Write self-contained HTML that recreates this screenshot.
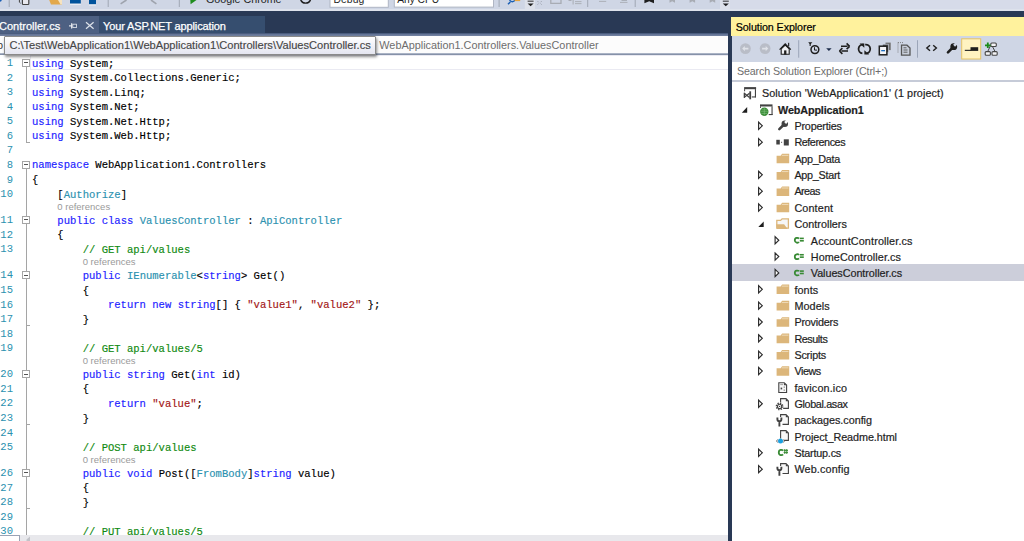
<!DOCTYPE html>
<html><head><meta charset="utf-8">
<style>
*{margin:0;padding:0;box-sizing:border-box}
html,body{width:1024px;height:541px;overflow:hidden;background:#fff;position:relative;font-family:"Liberation Sans",sans-serif}
.a{position:absolute}
.t{position:absolute;white-space:pre;line-height:1}
#tb{left:0;top:0;width:1024px;height:11px;background:#cfd6e5}
#well{left:0;top:11px;width:1024px;height:25px;background:#293955}
.code{font-family:"Liberation Mono",monospace;font-size:10.56px;color:#000;-webkit-text-stroke-width:0.15px}
.k{color:#2222ff}.ty{color:#2b91af}.s{color:#a31515}.c{color:#108a10}
.ln{font-family:"Liberation Mono",monospace;font-size:10.56px;color:#2b91af;text-align:right;width:13px;left:0}
.cl{font-size:9.5px;color:#9a9a9a}
.se{font-size:11px;color:#1e1e1e;-webkit-text-stroke:0.2px #1e1e1e}
</style></head><body>
<!-- toolbar -->
<div class="a" id="tb"></div>
<div class="a" style="left:720px;top:0;width:304px;height:11px;background:#d6dbe9"></div>
<div class="a" style="left:0;top:9px;width:1024px;height:2px;background:#dde2ec"></div>
<!-- tab well -->
<div class="a" id="well"></div>
<div class="a" style="left:0;top:16px;width:99px;height:18px;background:#4d6082"></div>
<div class="a" style="left:99px;top:16px;width:166px;height:17px;background:#364e6f"></div>
<div class="a" style="left:0;top:33px;width:728px;height:1px;background:#4a5c7e"></div><div class="a" style="left:0;top:34px;width:728px;height:2px;background:linear-gradient(#5f7092,#7584a3)"></div>
<div class="t" style="left:-1px;top:21px;font-size:11px;color:#fff;-webkit-text-stroke:0.25px #fff">Controller.cs</div>
<div class="t" style="left:103.00px;top:21.00px;font-size:11px;letter-spacing:-0.125px;color:#fff;-webkit-text-stroke:0.25px #fff">Your ASP.NET application</div>

<!-- nav bar -->
<div class="a" style="left:0;top:36px;width:728px;height:17px;background:#fcfcfc"></div>
<div class="a" style="left:0;top:53px;width:728px;height:1px;background:#aab3c5"></div><div class="a" style="left:0;top:54px;width:728px;height:1px;background:#8591a8"></div>
<div class="t" style="left:379.30px;top:40.00px;font-size:10.85px;letter-spacing:0.007px;color:#6d6d6d;">WebApplication1.Controllers.ValuesController</div>

<!-- editor -->
<div class="t" style="left:-3px;top:40px;font-size:10.85px;color:#3a3a3a">b</div>
<div class="a" style="left:30px;top:55px;width:702px;height:15px;border:1px solid #eaeaf2"></div>
<div class="t ln" style="top:58.11px">1</div>
<div class="t code" style="left:32px;top:58.61px"><span class="k">using</span> System;</div>
<div class="t ln" style="top:72.65px">2</div>
<div class="t code" style="left:32px;top:73.15px"><span class="k">using</span> System.Collections.Generic;</div>
<div class="t ln" style="top:87.20px">3</div>
<div class="t code" style="left:32px;top:87.70px"><span class="k">using</span> System.Linq;</div>
<div class="t ln" style="top:101.75px">4</div>
<div class="t code" style="left:32px;top:102.25px"><span class="k">using</span> System.Net;</div>
<div class="t ln" style="top:116.30px">5</div>
<div class="t code" style="left:32px;top:116.80px"><span class="k">using</span> System.Net.Http;</div>
<div class="t ln" style="top:130.85px">6</div>
<div class="t code" style="left:32px;top:131.35px"><span class="k">using</span> System.Web.Http;</div>
<div class="t ln" style="top:145.40px">7</div>
<div class="t ln" style="top:159.95px">8</div>
<div class="t code" style="left:32px;top:160.45px"><span class="k">namespace</span> WebApplication1.Controllers</div>
<div class="t ln" style="top:174.50px">9</div>
<div class="t code" style="left:32px;top:175.00px">{</div>
<div class="t ln" style="top:189.05px">10</div>
<div class="t code" style="left:32px;top:189.55px">    [<span class="ty">Authorize</span>]</div>
<div class="t cl" style="left:57.34px;top:202.10px">0 references</div>
<div class="t ln" style="top:215.21px">11</div>
<div class="t code" style="left:32px;top:215.71px">    <span class="k">public</span> <span class="k">class</span> <span class="ty">ValuesController</span> : <span class="ty">ApiController</span></div>
<div class="t ln" style="top:229.75px">12</div>
<div class="t code" style="left:32px;top:230.25px">    {</div>
<div class="t ln" style="top:244.30px">13</div>
<div class="t code" style="left:32px;top:244.80px">        <span class="c">// GET api/values</span></div>
<div class="t cl" style="left:82.69px;top:257.36px">0 references</div>
<div class="t ln" style="top:270.46px">14</div>
<div class="t code" style="left:32px;top:270.96px">        <span class="k">public</span> <span class="ty">IEnumerable</span>&lt;<span class="k">string</span>&gt; Get()</div>
<div class="t ln" style="top:285.01px">15</div>
<div class="t code" style="left:32px;top:285.51px">        {</div>
<div class="t ln" style="top:299.56px">16</div>
<div class="t code" style="left:32px;top:300.06px">            <span class="k">return</span> <span class="k">new</span> <span class="k">string</span>[] { <span class="s">&quot;value1&quot;</span>, <span class="s">&quot;value2&quot;</span> };</div>
<div class="t ln" style="top:314.11px">17</div>
<div class="t code" style="left:32px;top:314.61px">        }</div>
<div class="t ln" style="top:328.66px">18</div>
<div class="t ln" style="top:343.21px">19</div>
<div class="t code" style="left:32px;top:343.71px">        <span class="c">// GET api/values/5</span></div>
<div class="t cl" style="left:82.69px;top:356.26px">0 references</div>
<div class="t ln" style="top:369.37px">20</div>
<div class="t code" style="left:32px;top:369.87px">        <span class="k">public</span> <span class="k">string</span> Get(<span class="k">int</span> id)</div>
<div class="t ln" style="top:383.92px">21</div>
<div class="t code" style="left:32px;top:384.42px">        {</div>
<div class="t ln" style="top:398.46px">22</div>
<div class="t code" style="left:32px;top:398.96px">            <span class="k">return</span> <span class="s">&quot;value&quot;</span>;</div>
<div class="t ln" style="top:413.01px">23</div>
<div class="t code" style="left:32px;top:413.51px">        }</div>
<div class="t ln" style="top:427.56px">24</div>
<div class="t ln" style="top:442.11px">25</div>
<div class="t code" style="left:32px;top:442.61px">        <span class="c">// POST api/values</span></div>
<div class="t cl" style="left:82.69px;top:455.16px">0 references</div>
<div class="t ln" style="top:468.27px">26</div>
<div class="t code" style="left:32px;top:468.77px">        <span class="k">public</span> <span class="k">void</span> Post([<span class="ty">FromBody</span>]<span class="k">string</span> value)</div>
<div class="t ln" style="top:482.82px">27</div>
<div class="t code" style="left:32px;top:483.32px">        {</div>
<div class="t ln" style="top:497.37px">28</div>
<div class="t code" style="left:32px;top:497.87px">        }</div>
<div class="t ln" style="top:511.92px">29</div>
<div class="t ln" style="top:526.47px">30</div>
<div class="t code" style="left:32px;top:526.97px">        <span class="c">// PUT api/values/5</span></div>
<div class="a" style="left:22px;top:58.80px;width:8px;height:8px;border:1px solid #a5a5a5;background:#fff"></div>
<div class="a" style="left:24px;top:62.30px;width:4px;height:1px;background:#555"></div>
<div class="a" style="left:22px;top:160.64px;width:8px;height:8px;border:1px solid #a5a5a5;background:#fff"></div>
<div class="a" style="left:24px;top:164.14px;width:4px;height:1px;background:#555"></div>
<div class="a" style="left:22px;top:215.90px;width:8px;height:8px;border:1px solid #a5a5a5;background:#fff"></div>
<div class="a" style="left:24px;top:219.40px;width:4px;height:1px;background:#555"></div>
<div class="a" style="left:22px;top:271.16px;width:8px;height:8px;border:1px solid #a5a5a5;background:#fff"></div>
<div class="a" style="left:24px;top:274.66px;width:4px;height:1px;background:#555"></div>
<div class="a" style="left:22px;top:370.06px;width:8px;height:8px;border:1px solid #a5a5a5;background:#fff"></div>
<div class="a" style="left:24px;top:373.56px;width:4px;height:1px;background:#555"></div>
<div class="a" style="left:22px;top:468.96px;width:8px;height:8px;border:1px solid #a5a5a5;background:#fff"></div>
<div class="a" style="left:24px;top:472.46px;width:4px;height:1px;background:#555"></div>
<div class="a" style="left:26px;top:66.80px;width:1px;height:75.14px;background:#a5a5a5"></div>
<div class="a" style="left:26px;top:141.94px;width:4px;height:1px;background:#a5a5a5"></div>
<div class="a" style="left:26px;top:168.64px;width:1px;height:47.26px;background:#a5a5a5"></div>
<div class="a" style="left:26px;top:223.90px;width:1px;height:47.26px;background:#a5a5a5"></div>
<div class="a" style="left:26px;top:279.16px;width:1px;height:90.90px;background:#a5a5a5"></div>
<div class="a" style="left:26px;top:378.06px;width:1px;height:90.90px;background:#a5a5a5"></div>
<div class="a" style="left:26px;top:476.96px;width:1px;height:64.04px;background:#a5a5a5"></div>
<div class="a" style="left:26px;top:325.20px;width:4px;height:1px;background:#a5a5a5"></div>
<div class="a" style="left:26px;top:424.11px;width:4px;height:1px;background:#a5a5a5"></div>
<div class="a" style="left:26px;top:508.46px;width:4px;height:1px;background:#a5a5a5"></div>
<div class="a" style="left:0;top:535px;width:728px;height:6px;background:#e8e8ec"></div>
<div class="a" style="left:0;top:535px;width:20px;height:6px;background:#fff;border-top:1px solid #9aa3b5;border-right:1px solid #9aa3b5"></div>
<svg class="a" style="left:0;top:535px" width="40" height="6"><path d="M26.5 4.5 L30 1.5 V6 H26.5 Z" fill="#c2c3c9"/></svg>

<!-- tooltip -->
<div class="a" style="left:4px;top:36px;width:372px;height:19px;border:1px solid #8a8a8a;background:linear-gradient(#ffffff,#e4e5f0);box-shadow:1px 2px 3px rgba(0,0,0,0.45);border-radius:1px"></div>
<div class="t" style="left:9.40px;top:39.70px;font-size:11.1px;letter-spacing:0.000px;color:#464646;-webkit-text-stroke:0.15px #464646">C:\Test\WebApplication1\WebApplication1\Controllers\ValuesController.cs</div>

<!-- separator -->
<div class="a" style="left:728px;top:11px;width:4px;height:530px;background:#293955"></div>
<!-- solution explorer -->
<div class="a" style="left:731px;top:17px;width:293px;height:19px;background:#fff29d"></div>
<div class="t" style="left:735.70px;top:22.00px;font-size:10.7px;letter-spacing:-0.074px;color:#000;-webkit-text-stroke:0.2px #000">Solution Explorer</div>
<div class="a" style="left:732px;top:36px;width:292px;height:26px;background:#cfd6e5"></div>
<div class="a" style="left:732px;top:62px;width:292px;height:18px;background:#fff"></div>
<div class="a" style="left:732px;top:80px;width:292px;height:2px;background:#c6cbd8"></div>
<div class="t" style="left:736.90px;top:66.00px;font-size:10.7px;letter-spacing:-0.105px;color:#6d6d6d;">Search Solution Explorer (Ctrl+;)</div>
<div class="t se" style="left:762.00px;top:88.36px;font-size:10.8px;letter-spacing:0.084px;">Solution &#x27;WebApplication1&#x27; (1 project)</div>
<div class="t se" style="left:778.00px;top:104.71px;font-size:10.8px;letter-spacing:-0.120px;font-weight:bold;">WebApplication1</div>
<div class="t se" style="left:794.40px;top:121.06px;font-size:10.8px;letter-spacing:-0.183px;">Properties</div>
<div class="t se" style="left:794.40px;top:137.41px;font-size:10.8px;letter-spacing:-0.449px;">References</div>
<div class="t se" style="left:794.40px;top:153.76px;font-size:10.8px;letter-spacing:-0.309px;">App_Data</div>
<div class="t se" style="left:794.40px;top:170.11px;font-size:10.8px;letter-spacing:-0.263px;">App_Start</div>
<div class="t se" style="left:794.40px;top:186.46px;font-size:10.8px;letter-spacing:-0.547px;">Areas</div>
<div class="t se" style="left:794.40px;top:202.81px;font-size:10.8px;letter-spacing:0.141px;">Content</div>
<div class="t se" style="left:794.40px;top:219.16px;font-size:10.8px;letter-spacing:0.028px;">Controllers</div>
<div class="t se" style="left:810.80px;top:235.51px;font-size:10.8px;letter-spacing:0.140px;">AccountController.cs</div>
<div class="t se" style="left:810.80px;top:251.86px;font-size:10.8px;letter-spacing:0.086px;">HomeController.cs</div>
<div class="a" style="left:732px;top:264.35px;width:292px;height:16.35px;background:#ccceda"></div>
<div class="t se" style="left:810.80px;top:268.21px;font-size:10.8px;letter-spacing:-0.052px;">ValuesController.cs</div>
<div class="t se" style="left:794.40px;top:284.56px;font-size:10.8px;letter-spacing:0.091px;">fonts</div>
<div class="t se" style="left:794.40px;top:300.91px;font-size:10.8px;letter-spacing:0.094px;">Models</div>
<div class="t se" style="left:794.40px;top:317.26px;font-size:10.8px;letter-spacing:-0.204px;">Providers</div>
<div class="t se" style="left:794.40px;top:333.61px;font-size:10.8px;letter-spacing:-0.436px;">Results</div>
<div class="t se" style="left:794.40px;top:349.96px;font-size:10.8px;letter-spacing:-0.191px;">Scripts</div>
<div class="t se" style="left:794.40px;top:366.31px;font-size:10.8px;letter-spacing:-0.442px;">Views</div>
<div class="t se" style="left:794.40px;top:382.66px;font-size:10.8px;letter-spacing:0.157px;">favicon.ico</div>
<div class="t se" style="left:794.40px;top:399.01px;font-size:10.8px;letter-spacing:-0.342px;">Global.asax</div>
<div class="t se" style="left:794.40px;top:415.36px;font-size:10.8px;letter-spacing:-0.031px;">packages.config</div>
<div class="t se" style="left:794.40px;top:431.71px;font-size:10.8px;letter-spacing:-0.069px;">Project_Readme.html</div>
<div class="t se" style="left:794.40px;top:448.06px;font-size:10.8px;letter-spacing:-0.194px;">Startup.cs</div>
<div class="t se" style="left:794.40px;top:464.41px;font-size:10.8px;letter-spacing:0.140px;">Web.config</div>
<svg class="a" style="left:0;top:0" width="1024" height="541"><rect x="744.10" y="87.10" width="12.00" height="2.10" fill="#424242" /><rect x="754.90" y="89.10" width="1.10" height="8.20" fill="#424242" /><rect x="751.80" y="96.40" width="4.20" height="1.10" fill="#424242" /><rect x="744.10" y="89.10" width="1.00" height="2.20" fill="#424242" /><rect x="743.70" y="92.70" width="1.30" height="5.20" fill="#424242" /><rect x="749.30" y="91.30" width="1.80" height="8.00" fill="#424242" /><path d="M744.30 93.30 L749.50 97.50 M744.30 97.30 L749.50 93.30" fill="none" stroke="#424242" stroke-width="1.3" /><path d="M747.20 107.05 L747.20 112.65 L741.80 112.65 Z" fill="#1e1e1e" /><rect x="760.00" y="104.40" width="12.50" height="2.10" fill="#424242" /><rect x="771.50" y="106.40" width="1.10" height="8.60" fill="#424242" /><rect x="768.70" y="114.00" width="3.90" height="1.10" fill="#424242" /><rect x="760.00" y="106.40" width="1.00" height="1.50" fill="#424242" /><circle cx="764.30" cy="111.70" r="4.2" fill="#388a34"/><path d="M760.70 111.70 H767.90 M764.30 107.90 V115.40 M761.30 109.90 H767.30 M761.30 113.50 H767.30" fill="none" stroke="#8fc98c" stroke-width="0.5" /><path d="M758.60 122.20 L762.30 125.80 L758.60 129.40 Z" fill="#fff" stroke="#2a2a2a" stroke-width="1.15" stroke-linejoin="miter"/><g transform="translate(777.90,120.50) scale(1.0)"><path d="M1.4 8.7 L5.6 4.5" stroke="#424242" stroke-width="2.5" stroke-linecap="round"/><circle cx="6.9" cy="3.3" r="3.25" fill="#424242"/><rect x="7.2" y="-0.6" width="2.6" height="3.6" fill="#fff" transform="rotate(45 8.5 1.2)"/></g><path d="M758.60 138.55 L762.30 142.15 L758.60 145.75 Z" fill="#fff" stroke="#2a2a2a" stroke-width="1.15" stroke-linejoin="miter"/><rect x="776.30" y="139.80" width="3.50" height="4.70" fill="#424242" /><rect x="781.10" y="141.80" width="1.00" height="1.00" fill="#424242" /><rect x="783.80" y="139.30" width="5.00" height="6.20" fill="#424242" /><path d="M776.60 155.70 L780.60 155.70 L782.10 153.70 L789.20 153.70 L789.20 163.30 L776.60 163.30 Z" fill="#dcb67a" /><rect x="781.80" y="154.90" width="6.60" height="0.80" fill="#f3e3c6" /><path d="M758.60 171.25 L762.30 174.85 L758.60 178.45 Z" fill="#fff" stroke="#2a2a2a" stroke-width="1.15" stroke-linejoin="miter"/><path d="M776.60 172.05 L780.60 172.05 L782.10 170.05 L789.20 170.05 L789.20 179.65 L776.60 179.65 Z" fill="#dcb67a" /><rect x="781.80" y="171.25" width="6.60" height="0.80" fill="#f3e3c6" /><path d="M758.60 187.60 L762.30 191.20 L758.60 194.80 Z" fill="#fff" stroke="#2a2a2a" stroke-width="1.15" stroke-linejoin="miter"/><path d="M776.60 188.40 L780.60 188.40 L782.10 186.40 L789.20 186.40 L789.20 196.00 L776.60 196.00 Z" fill="#dcb67a" /><rect x="781.80" y="187.60" width="6.60" height="0.80" fill="#f3e3c6" /><path d="M758.60 203.95 L762.30 207.55 L758.60 211.15 Z" fill="#fff" stroke="#2a2a2a" stroke-width="1.15" stroke-linejoin="miter"/><path d="M776.60 204.75 L780.60 204.75 L782.10 202.75 L789.20 202.75 L789.20 212.35 L776.60 212.35 Z" fill="#dcb67a" /><rect x="781.80" y="203.95" width="6.60" height="0.80" fill="#f3e3c6" /><path d="M763.70 221.50 L763.70 227.10 L758.30 227.10 Z" fill="#1e1e1e" /><path d="M776.80 228.20 L776.80 220.40 L780.60 220.40 L782.10 218.80 L788.40 218.80 L788.40 228.20 Z" fill="#f6f6f6" stroke="#dcb67a" stroke-width="1.3" /><path d="M776.10 224.20 L784.10 224.20 L787.60 228.90 L776.90 228.90 Z" fill="#dcb67a" /><path d="M775.10 236.65 L778.80 240.25 L775.10 243.85 Z" fill="#fff" stroke="#2a2a2a" stroke-width="1.15" stroke-linejoin="miter"/><path d="M799.00 238.60 C798.20 237.60 794.80 237.20 794.80 240.30 C794.80 243.40 798.20 243.00 799.00 242.00" fill="none" stroke="#388a34" stroke-width="1.8" /><rect x="799.80" y="237.60" width="4.00" height="1.60" fill="#388a34" /><rect x="799.80" y="240.00" width="4.00" height="1.60" fill="#388a34" /><path d="M775.10 253.00 L778.80 256.60 L775.10 260.20 Z" fill="#fff" stroke="#2a2a2a" stroke-width="1.15" stroke-linejoin="miter"/><path d="M799.00 254.95 C798.20 253.95 794.80 253.55 794.80 256.65 C794.80 259.75 798.20 259.35 799.00 258.35" fill="none" stroke="#388a34" stroke-width="1.8" /><rect x="799.80" y="253.95" width="4.00" height="1.60" fill="#388a34" /><rect x="799.80" y="256.35" width="4.00" height="1.60" fill="#388a34" /><path d="M775.10 269.35 L778.80 272.95 L775.10 276.55 Z" fill="#fff" stroke="#2a2a2a" stroke-width="1.15" stroke-linejoin="miter"/><path d="M799.00 271.30 C798.20 270.30 794.80 269.90 794.80 273.00 C794.80 276.10 798.20 275.70 799.00 274.70" fill="none" stroke="#388a34" stroke-width="1.8" /><rect x="799.80" y="270.30" width="4.00" height="1.60" fill="#388a34" /><rect x="799.80" y="272.70" width="4.00" height="1.60" fill="#388a34" /><path d="M758.60 285.70 L762.30 289.30 L758.60 292.90 Z" fill="#fff" stroke="#2a2a2a" stroke-width="1.15" stroke-linejoin="miter"/><path d="M776.60 286.50 L780.60 286.50 L782.10 284.50 L789.20 284.50 L789.20 294.10 L776.60 294.10 Z" fill="#dcb67a" /><rect x="781.80" y="285.70" width="6.60" height="0.80" fill="#f3e3c6" /><path d="M758.60 302.05 L762.30 305.65 L758.60 309.25 Z" fill="#fff" stroke="#2a2a2a" stroke-width="1.15" stroke-linejoin="miter"/><path d="M776.60 302.85 L780.60 302.85 L782.10 300.85 L789.20 300.85 L789.20 310.45 L776.60 310.45 Z" fill="#dcb67a" /><rect x="781.80" y="302.05" width="6.60" height="0.80" fill="#f3e3c6" /><path d="M758.60 318.40 L762.30 322.00 L758.60 325.60 Z" fill="#fff" stroke="#2a2a2a" stroke-width="1.15" stroke-linejoin="miter"/><path d="M776.60 319.20 L780.60 319.20 L782.10 317.20 L789.20 317.20 L789.20 326.80 L776.60 326.80 Z" fill="#dcb67a" /><rect x="781.80" y="318.40" width="6.60" height="0.80" fill="#f3e3c6" /><path d="M758.60 334.75 L762.30 338.35 L758.60 341.95 Z" fill="#fff" stroke="#2a2a2a" stroke-width="1.15" stroke-linejoin="miter"/><path d="M776.60 335.55 L780.60 335.55 L782.10 333.55 L789.20 333.55 L789.20 343.15 L776.60 343.15 Z" fill="#dcb67a" /><rect x="781.80" y="334.75" width="6.60" height="0.80" fill="#f3e3c6" /><path d="M758.60 351.10 L762.30 354.70 L758.60 358.30 Z" fill="#fff" stroke="#2a2a2a" stroke-width="1.15" stroke-linejoin="miter"/><path d="M776.60 351.90 L780.60 351.90 L782.10 349.90 L789.20 349.90 L789.20 359.50 L776.60 359.50 Z" fill="#dcb67a" /><rect x="781.80" y="351.10" width="6.60" height="0.80" fill="#f3e3c6" /><path d="M758.60 367.45 L762.30 371.05 L758.60 374.65 Z" fill="#fff" stroke="#2a2a2a" stroke-width="1.15" stroke-linejoin="miter"/><path d="M776.60 368.25 L780.60 368.25 L782.10 366.25 L789.20 366.25 L789.20 375.85 L776.60 375.85 Z" fill="#dcb67a" /><rect x="781.80" y="367.45" width="6.60" height="0.80" fill="#f3e3c6" /><path d="M778.80 382.70 H784.20 L786.60 385.10 V392.50 H778.80 Z" fill="#f8f8f8" stroke="#424242" stroke-width="1.1" /><path d="M784.00 382.70 L786.60 385.30 L784.00 385.30 Z" fill="#424242" /><rect x="780.60" y="387.60" width="1.60" height="1.80" fill="#424242" /><rect x="783.70" y="386.60" width="1.00" height="1.00" fill="#424242" /><rect x="783.70" y="389.60" width="1.00" height="1.00" fill="#424242" /><rect x="780.20" y="384.30" width="3.00" height="0.80" fill="#888" /><path d="M758.60 400.15 L762.30 403.75 L758.60 407.35 Z" fill="#fff" stroke="#2a2a2a" stroke-width="1.15" stroke-linejoin="miter"/><path d="M780.60 398.60 H786.00 L788.40 401.00 V408.40 H780.60 Z" fill="#f8f8f8" stroke="#424242" stroke-width="1.1" /><path d="M785.80 398.60 L788.40 401.20 L785.80 401.20 Z" fill="#424242" /><circle cx="779.60" cy="406.40" r="4.2" fill="#fff"/><circle cx="779.60" cy="406.40" r="3.1" fill="none" stroke="#424242" stroke-width="1.6" stroke-dasharray="1.3 1.13"/><circle cx="779.60" cy="406.40" r="2.1" fill="#fff" stroke="#424242" stroke-width="1.1"/><circle cx="779.60" cy="406.40" r="0.7" fill="#424242"/><path d="M780.60 414.60 H786.00 L788.40 417.00 V424.40 H780.60 Z" fill="#f8f8f8" stroke="#424242" stroke-width="1.1" /><path d="M785.80 414.60 L788.40 417.20 L785.80 417.20 Z" fill="#424242" /><rect x="777.50" y="417.00" width="5.00" height="9.00" fill="#fff" /><path d="M777.40 417.60 V419.20 Q777.40 421.20 779.40 421.20 Q781.40 421.20 781.40 419.20 V417.60 M779.40 421.00 V426.60" fill="none" stroke="#424242" stroke-width="1.9" /><path d="M780.60 430.60 H786.00 L788.40 433.00 V440.40 H780.60 Z" fill="#f8f8f8" stroke="#424242" stroke-width="1.1" /><path d="M785.80 430.60 L788.40 433.20 L785.80 433.20 Z" fill="#424242" /><rect x="776.00" y="438.50" width="8.00" height="4.00" fill="#fff" /><circle cx="780.50" cy="441.00" r="2.5" fill="#1ba1e2"/><path d="M777.60 439.50 L776.60 441.00 L777.60 442.50 M783.40 439.50 L784.40 441.00 L783.40 442.50" fill="none" stroke="#555" stroke-width="0.9" /><path d="M758.60 449.20 L762.30 452.80 L758.60 456.40 Z" fill="#fff" stroke="#2a2a2a" stroke-width="1.15" stroke-linejoin="miter"/><path d="M783.00 450.60 C782.20 449.60 778.80 449.20 778.80 452.50 C778.80 455.80 782.20 455.40 783.00 454.40" fill="none" stroke="#388a34" stroke-width="1.8" /><path d="M784.80 449.00 V454.00 M786.80 449.00 V454.00 M783.60 450.40 H788.00 M783.60 452.40 H788.00" fill="none" stroke="#388a34" stroke-width="1" /><path d="M758.60 465.55 L762.30 469.15 L758.60 472.75 Z" fill="#fff" stroke="#2a2a2a" stroke-width="1.15" stroke-linejoin="miter"/><path d="M780.60 463.65 H786.00 L788.40 466.05 V473.45 H780.60 Z" fill="#f8f8f8" stroke="#424242" stroke-width="1.1" /><path d="M785.80 463.65 L788.40 466.25 L785.80 466.25 Z" fill="#424242" /><rect x="777.50" y="466.05" width="5.00" height="9.00" fill="#fff" /><path d="M777.40 466.65 V468.25 Q777.40 470.25 779.40 470.25 Q781.40 470.25 781.40 468.25 V466.65 M779.40 470.05 V475.65" fill="none" stroke="#424242" stroke-width="1.9" /><circle cx="745.4" cy="48.6" r="5.4" fill="#b9bdc7"/><path d="M742.20 48.6 L744.80 46.0 L744.80 47.7 L748.40 47.7 L748.40 49.5 L744.80 49.5 L744.80 51.2 Z" fill="#dfe2e8"/><circle cx="765.1" cy="48.6" r="5.4" fill="#b9bdc7"/><path d="M768.30 48.6 L765.70 46.0 L765.70 47.7 L762.10 47.7 L762.10 49.5 L765.70 49.5 L765.70 51.2 Z" fill="#dfe2e8"/><path d="M781.2 54.3 V48.8 L785.2 45.0 L789.2 48.8 V54.3 Z" fill="#f0f1f4" stroke="#1e1e1e" stroke-width="1.1"/><path d="M779.6 49.6 L785.2 44.0 L790.8 49.6" fill="none" stroke="#1e1e1e" stroke-width="1.3"/><rect x="788.1" y="42.8" width="1.1" height="3.4" fill="#1e1e1e"/><rect x="784.1" y="50.4" width="2.3" height="4.2" fill="#1e1e1e"/><rect x="798.2" y="40.2" width="1" height="17.5" fill="#9ba5b8"/><rect x="917" y="40.2" width="1" height="17.5" fill="#9ba5b8"/><path d="M808.2 42.2 H812.4 L810.3 44.6 Z" fill="#1e1e1e"/><rect x="809.6" y="43" width="1.1" height="3" fill="#1e1e1e"/><circle cx="814.9" cy="49.6" r="3.9" fill="none" stroke="#1e1e1e" stroke-width="1.5"/><path d="M814.5 47.2 V50.1 H817" fill="none" stroke="#1e1e1e" stroke-width="1"/><path d="M826.2 48.2 H831.6 L828.9 50.9 Z" fill="#1e2c4a"/><path d="M841 46.3 H847.5 M849.6 46.3 L846.6 43.4 M849.6 46.3 L846.6 49.2" fill="none" stroke="#1e1e1e" stroke-width="1.6"/><path d="M848 51 H841.5 M839.4 51 L842.4 48.1 M839.4 51 L842.4 53.9" fill="none" stroke="#1e1e1e" stroke-width="1.6"/><path d="M863.6 44.6 A4.4 4.4 0 0 0 862.4 53.4" fill="none" stroke="#1e1e1e" stroke-width="1.8"/><path d="M865.2 44.6 A4.4 4.4 0 0 1 866.4 53.4" fill="none" stroke="#1e1e1e" stroke-width="1.8"/><path d="M859.6 43.5 H864.3 V47.8 Z" fill="#1e1e1e"/><path d="M864.4 50.2 V54.5 H869.1 Z" fill="#1e1e1e"/><rect x="885.5" y="42.6" width="5.2" height="7.5" fill="#6e6e6e"/><rect x="882.5" y="44.2" width="6" height="8" fill="#555" stroke="#cfd6e5" stroke-width="0.6"/><rect x="879.3" y="46.2" width="7.6" height="8.6" fill="#f4f4f6" stroke="#1e1e1e" stroke-width="1.5"/><rect x="881.2" y="50" width="3.8" height="1.3" fill="#1f6fbf"/><path d="M898 42.5 V53" fill="none" stroke="#777" stroke-width="0.9" stroke-dasharray="1 1"/><path d="M898 42.6 H904" fill="none" stroke="#777" stroke-width="0.9" stroke-dasharray="1 1"/><path d="M901.5 45.2 H907 L910 48 V55.2 H901.5 Z" fill="#c9cfdb" stroke="#555" stroke-width="1.3"/><path d="M903.5 47.8 H906.5 M903.5 50 H907.5 M903.5 52.2 H907.5" stroke="#555" stroke-width="0.9"/><path d="M930 45.2 L926.8 48 L930 50.8 M933.2 45.2 L936.4 48 L933.2 50.8" fill="none" stroke="#1e1e1e" stroke-width="1.4"/><g transform="translate(946.50,43.20) scale(1.05)"><path d="M1.4 8.7 L5.6 4.5" stroke="#1e1e1e" stroke-width="2.5" stroke-linecap="round"/><circle cx="6.9" cy="3.3" r="3.25" fill="#1e1e1e"/><rect x="7.2" y="-0.6" width="2.6" height="3.6" fill="#cfd6e5" transform="rotate(45 8.5 1.2)"/></g><rect x="961.7" y="38.8" width="19" height="20.2" fill="#fff3c1" stroke="#e5c365" stroke-width="1"/><rect x="964.8" y="49.8" width="6.5" height="1.1" fill="#1e1e1e"/><rect x="970.5" y="47.2" width="7.7" height="3.7" fill="#1e1e1e"/><rect x="990.8" y="43" width="5.5" height="3.5" rx="1" fill="#f4f4f6" stroke="#444" stroke-width="1.1"/><path d="M990.5 45.5 L987.8 51.4 M992.5 46.6 L995 51.4" stroke="#444" stroke-width="1"/><rect x="985.2" y="51.6" width="5.2" height="3.6" rx="1" fill="#f4f4f6" stroke="#444" stroke-width="1.1"/><rect x="992" y="51.6" width="5.2" height="3.6" rx="1" fill="#f4f4f6" stroke="#444" stroke-width="1.1"/><path d="M985 45.3 H990.6 M987.8 42.5 V48.1" stroke="#1a8a1a" stroke-width="1.8"/><path d="M0 0 H1.8 Q1.6 1.5 0 1.8 Z" fill="#1a5fb4"/><rect x="8.7" y="0" width="1" height="7" fill="#a0a7b4"/><rect x="107.7" y="0" width="1" height="7" fill="#a0a7b4"/><rect x="178.8" y="0" width="1" height="7" fill="#a0a7b4"/><rect x="498.6" y="0" width="1" height="7" fill="#a0a7b4"/><rect x="587.2" y="0" width="1" height="7" fill="#a0a7b4"/><rect x="634.7" y="0" width="1" height="7" fill="#a0a7b4"/><path d="M19.4 0 V2.2 L20.6 3.2" fill="none" stroke="#444" stroke-width="1"/><rect x="22.4" y="-2" width="6.4" height="6.5" rx="0.8" fill="#e8e8ee" stroke="#444" stroke-width="1.2"/><path d="M49.2 0 H62 V4.6 H51 Z" fill="#e2a84c"/><path d="M58 0 L60.5 4.4 H62 V0 Z" fill="#f6e3bf"/><rect x="70" y="0" width="10.8" height="3.6" fill="#00539c"/><rect x="70" y="3.8" width="10.8" height="1" fill="#eef1f6"/><rect x="89" y="0" width="7" height="4.3" fill="#00539c"/><rect x="89" y="4.5" width="7" height="1" fill="#eef1f6"/><path d="M126.5 0 L120.6 3.8" fill="none" stroke="#9ea3ad" stroke-width="1.6"/><path d="M151 0 L156.4 3.8" fill="none" stroke="#9ea3ad" stroke-width="1.6"/><path d="M190.3 0 H196.5 L190.6 4.2 Z" fill="#1e8c1e"/><path d="M300.6 0 A5.2 5.2 0 0 0 310.6 0" fill="none" stroke="#1e1e1e" stroke-width="1.4" transform="translate(0,-0.6)"/><rect x="330" y="-2" width="58.3" height="9.3" fill="#fff" stroke="#b0b6c4" stroke-width="1"/><rect x="394.3" y="-2" width="99.2" height="9.1" fill="#fff" stroke="#b0b6c4" stroke-width="1"/><path d="M508 4.2 L510.3 2" stroke="#1a5fb4" stroke-width="1.5"/><path d="M509.6 0 A3 3 0 0 0 515 0" fill="none" stroke="#1a5fb4" stroke-width="1.4"/><rect x="514.6" y="0" width="5.6" height="1.1" fill="#e7a33c"/><rect x="524.8" y="0" width="10.2" height="9" fill="#dde1ea"/><rect x="527.6" y="0.7" width="6" height="0.9" fill="#1e1e1e"/><path d="M527.6 3.4 H533.6 L530.6 6.2 Z" fill="#1e1e1e"/><path d="M537.6 1.2 l1 1 M541.6 1.2 l-1 1 M537.6 4.6 l1 -1 M541.6 4.6 l-1 -1" stroke="#8a8f99" stroke-width="0.8"/><path d="M550.8 0 V3.3 H561 V0" fill="none" stroke="#a8acb4" stroke-width="1.3"/><rect x="568.5" y="0" width="3" height="1" fill="#a8acb4"/><rect x="572.6" y="0" width="1" height="4.5" fill="#a8acb4"/><rect x="575" y="1.2" width="6.5" height="0.9" fill="#a8acb4"/><rect x="575" y="3.2" width="6.5" height="0.9" fill="#a8acb4"/><rect x="599" y="0.9" width="7.2" height="0.9" fill="#a8acb4"/><rect x="621.5" y="0" width="5.5" height="0.9" fill="#a8acb4"/><rect x="620" y="1.9" width="7.5" height="0.9" fill="#a8acb4"/><path d="M644.4 0 H654 V3.2 L649.2 1.2 L644.4 3.2 Z" fill="#1e1e1e"/><path d="M669.5 0 H675.0 V2.8 L672.2 1.3 L669.5 2.8 Z" fill="#a8acb4"/><path d="M689.6 0 H695.1 V2.8 L692.4 1.3 L689.6 2.8 Z" fill="#a8acb4"/><path d="M709.7 0 H715.2 V2.8 L712.5 1.3 L709.7 2.8 Z" fill="#a8acb4"/><rect x="720" y="0" width="10" height="9" fill="#dde1ea"/><rect x="722.8" y="0.7" width="6" height="0.9" fill="#1e1e1e"/><path d="M722.8 3.4 H728.8 L725.8 6.2 Z" fill="#1e1e1e"/><rect x="69" y="25.4" width="2.6" height="1" fill="#fff"/><rect x="71.2" y="23.2" width="1" height="5.4" fill="#fff"/><rect x="72.8" y="24.2" width="3.6" height="3.4" fill="none" stroke="#e8ebf0" stroke-width="0.8"/><path d="M86 22.2 L93.6 28.8 M93.6 22.2 L86 28.8" stroke="#dde2ea" stroke-width="1.2"/><text x="206.00" y="2.90" font-family="Liberation Sans" font-size="11" fill="#1e1e1e" font-weight="normal" textLength="75.50" lengthAdjust="spacingAndGlyphs">Google Chrome</text><text x="333.60" y="2.90" font-family="Liberation Sans" font-size="11" fill="#1e1e1e" font-weight="normal" textLength="30.60" lengthAdjust="spacingAndGlyphs">Debug</text><text x="397.20" y="2.90" font-family="Liberation Sans" font-size="11" fill="#1e1e1e" font-weight="normal" textLength="42.00" lengthAdjust="spacingAndGlyphs">Any CPU</text></svg>
</body></html>
